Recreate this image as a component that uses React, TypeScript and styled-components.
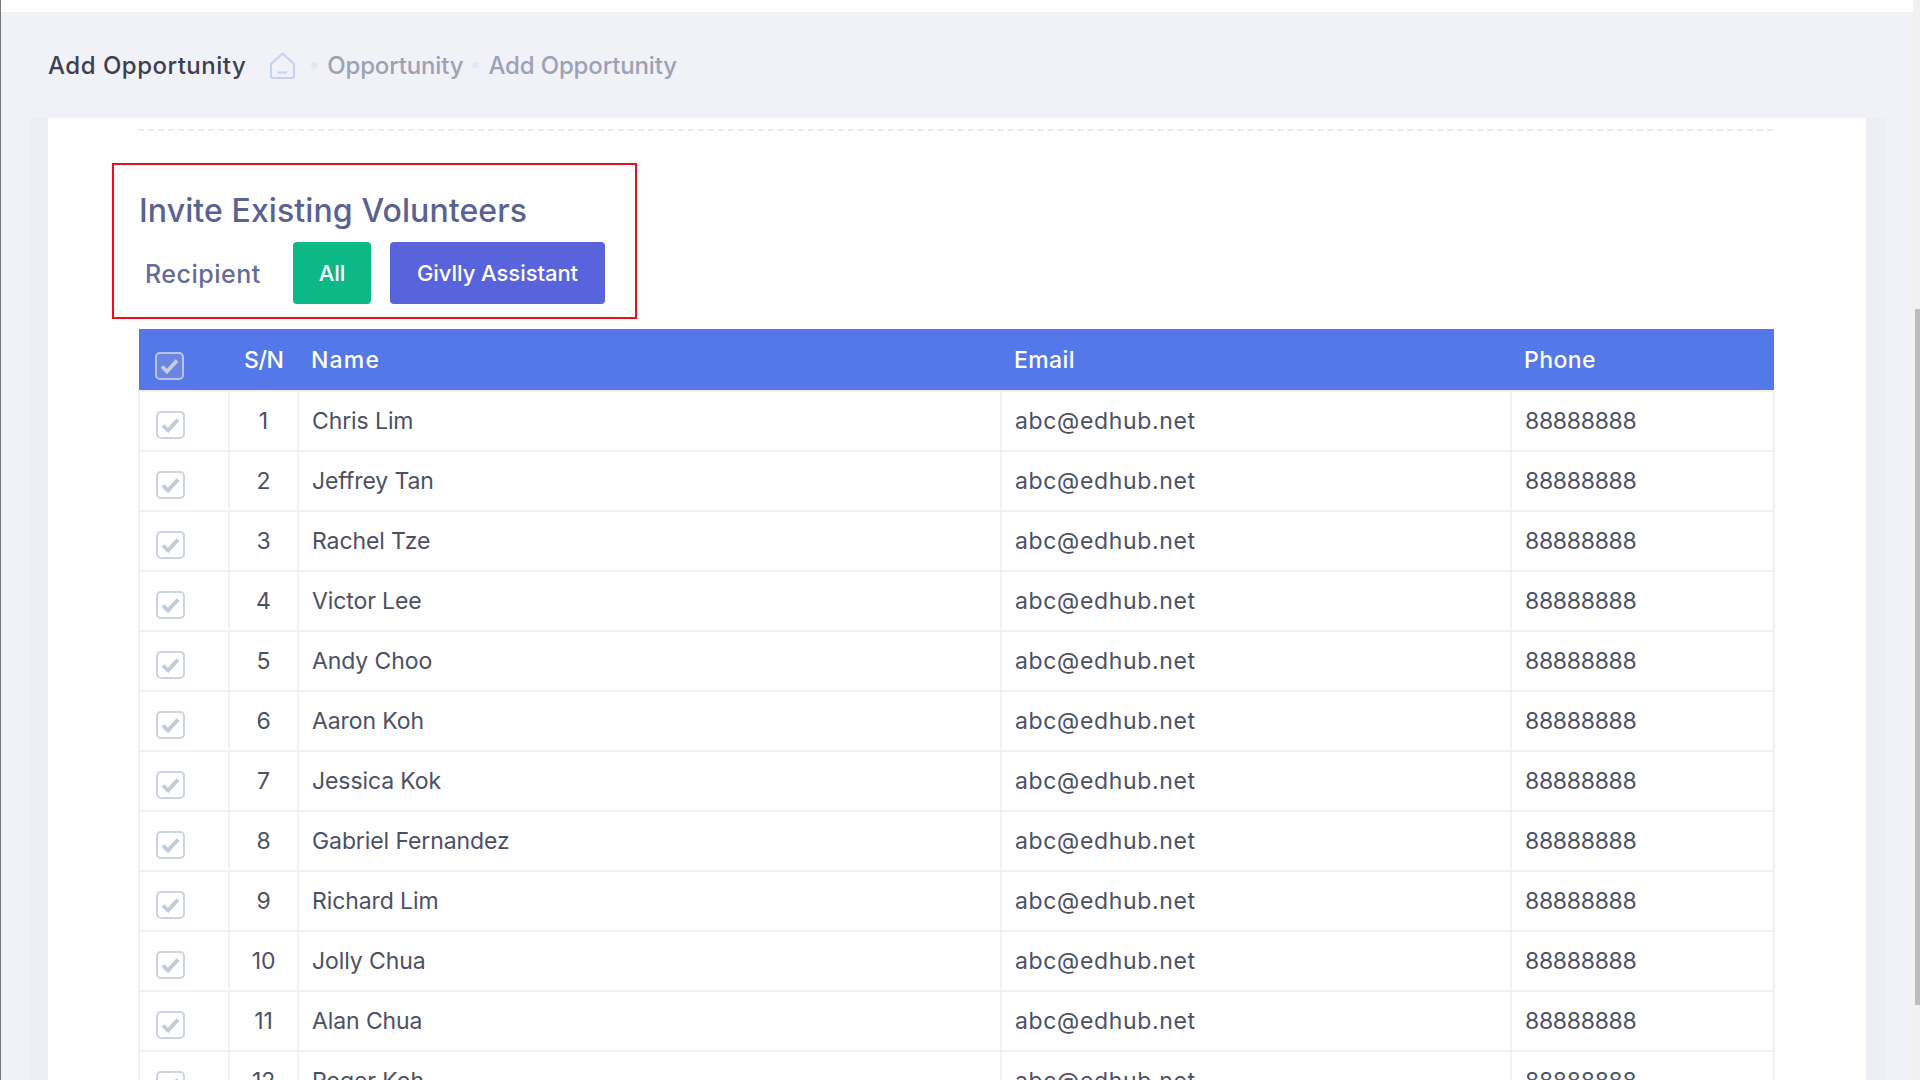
import React from "react";
import styled, { createGlobalStyle } from "styled-components";

const Global = createGlobalStyle`
  html, body { margin: 0; padding: 0; height: 100%; overflow: hidden; background: #f1f2f7; }
  #root { height: 100%; }
  * { box-sizing: border-box; }
`;

const Shell = styled.div`
  display: flex;
  width: 1920px;
  height: 1080px;
  overflow: hidden;
  font-family: Inter, "Liberation Sans", sans-serif;
  background: #f1f2f7;
  border-left: 1px solid #77787c;
`;

const Main = styled.main`
  flex: 1;
  min-width: 0;
  display: flex;
  flex-direction: column;
`;

const TopBar = styled.div`
  height: 13px;
  flex: none;
  background: #ffffff;
  border-bottom: 1px solid #eef0f4;
`;

const Breadcrumb = styled.header`
  height: 105px;
  flex: none;
  display: flex;
  align-items: center;
  padding: 0 0 0 47px;
`;

const PageTitle = styled.h1`
  margin: 0 23px 0 0;
  font-size: 24px;
  font-weight: 500;
  color: #3d4050;
  letter-spacing: 0.5px;
`;

const Crumb = styled.span`
  font-size: 24px;
  font-weight: 500;
  color: #9da1b6;
  letter-spacing: -0.15px;
`;

const Dot = styled.span`
  width: 7px;
  height: 7px;
  border-radius: 50%;
  background: #e6e8f0;
  margin: 0 9px;
  flex: none;
`;

const HomeIcon = styled.svg`
  width: 27px;
  height: 27px;
  flex: none;
  margin-right: 6px;
`;

const Band = styled.div`
  flex: 1;
  min-height: 0;
  width: 1855px;
  margin-left: 29px;
  padding: 0 19px 0 18px;
  background: #eeeff5;
`;

const Card = styled.section`
  height: 100%;
  background: #ffffff;
  padding: 11px 93px 0 90px;
  overflow: hidden;
`;

const Dashed = styled.div`
  border-top: 2px dashed #e9ebf1;
`;

const Highlight = styled.div`
  width: 525px;
  height: 156px;
  margin: 32px 0 10px -26px;
  padding: 24px 0 0 25px;
  border: 2px solid #ee0d1d;
`;

const Title = styled.h2`
  margin: 0 0 9px;
  font-size: 32px;
  line-height: 44px;
  font-weight: 500;
  color: #5a6291;
  letter-spacing: 0.1px;
`;

const RecipientRow = styled.div`
  display: flex;
  align-items: center;
  padding-left: 6px;
`;

const RecipientLabel = styled.span`
  width: 148px;
  font-size: 25px;
  font-weight: 500;
  color: #656c98;
  letter-spacing: 0.5px;
  padding-top: 1px;
`;

const FilterButton = styled.button<{ $color: string; $width: number }>`
  width: ${(p) => p.$width}px;
  height: 62px;
  margin-right: 19px;
  border: none;
  border-radius: 4px;
  background: ${(p) => p.$color};
  color: #ffffff;
  font-family: inherit;
  font-size: 22px;
  font-weight: 500;
  letter-spacing: -0.05px;
  padding: 0;
`;

const Table = styled.table`
  width: 1635px;
  table-layout: fixed;
  border-collapse: collapse;
`;

const HeadRow = styled.tr`
  height: 62px;
  background: #5478e9;
`;

const Th = styled.th<{ $center?: boolean; $spacing?: number }>`
  padding: 0 ${(p) => (p.$center ? 15 : 13)}px;
  text-align: ${(p) => (p.$center ? "center" : "left")};
  color: #ffffff;
  font-size: 23px;
  font-weight: 500;
  letter-spacing: ${(p) => p.$spacing ?? 0.4}px;
`;

const Row = styled.tr`
  height: 60px;
`;

const Td = styled.td<{ $center?: boolean; $spacing?: number }>`
  padding: 0 ${(p) => (p.$center ? 15 : 13)}px 1px;
  border: 2px solid #f1f2f7;
  text-align: ${(p) => (p.$center ? "center" : "left")};
  color: #4c5064;
  font-size: 23px;
  font-weight: 400;
  letter-spacing: ${(p) => p.$spacing ?? -0.1}px;
  white-space: nowrap;
`;

const CheckBox = styled.span<{ $head?: boolean }>`
  display: block;
  width: 29px;
  height: 28px;
  margin: ${(p) => (p.$head ? "13px" : "8px")} 0 0 3px;
  border-radius: 5px;
  border: 2px solid ${(p) => (p.$head ? "#b9c4e2" : "#cbd2e2")};
  background: ${(p) => (p.$head ? "#6b86e2" : "#ffffff")};
`;

const CheckSvg = styled.svg`
  display: block;
  width: 100%;
  height: 100%;
`;

const ScrollTrack = styled.div`
  width: 7px;
  flex: none;
  background: #f1f1f1;
  padding: 309px 0 0 2px;
`;

const ScrollThumb = styled.div`
  height: 696px;
  background: #bdbdbd;
`;

const Check = ({ head }: { head?: boolean }) => (
  <CheckBox $head={head}>
    <CheckSvg viewBox="0 0 25 24">
      <path d="M5 12.5l5 5L20 6.5" fill="none" stroke={head ? "#c9ced9" : "#c3cad9"} strokeWidth="3.8" />
    </CheckSvg>
  </CheckBox>
);

const names = [
  "Chris Lim",
  "Jeffrey Tan",
  "Rachel Tze",
  "Victor Lee",
  "Andy Choo",
  "Aaron Koh",
  "Jessica Kok",
  "Gabriel Fernandez",
  "Richard Lim",
  "Jolly Chua",
  "Alan Chua",
  "Roger Koh",
];

export default function App() {
  return (
    <Shell>
      <Global />
      <Main>
        <TopBar />
        <Breadcrumb>
          <PageTitle>Add Opportunity</PageTitle>
          <HomeIcon viewBox="0 0 27 27" fill="none" stroke="#c6d0f0" strokeWidth="2">
            <path d="M2 12L13.5 1.5 25 12v12a2 2 0 0 1-2 2H4a2 2 0 0 1-2-2z" />
            <path d="M9 20.5h9" />
          </HomeIcon>
          <Dot />
          <Crumb>Opportunity</Crumb>
          <Dot />
          <Crumb>Add Opportunity</Crumb>
        </Breadcrumb>
        <Band>
          <Card>
            <Dashed />
            <Highlight>
              <Title>Invite Existing Volunteers</Title>
              <RecipientRow>
                <RecipientLabel>Recipient</RecipientLabel>
                <FilterButton $color="#0cb886" $width={78}>All</FilterButton>
                <FilterButton $color="#5964dc" $width={215}>Givlly Assistant</FilterButton>
              </RecipientRow>
            </Highlight>
            <Table>
              <colgroup>
                <col style={{ width: 90 }} />
                <col style={{ width: 69 }} />
                <col style={{ width: 703 }} />
                <col style={{ width: 510 }} />
                <col style={{ width: 263 }} />
              </colgroup>
              <thead>
                <HeadRow>
                  <Th><Check head /></Th>
                  <Th $center $spacing={-0.4}>S/N</Th>
                  <Th $spacing={1.2}>Name</Th>
                  <Th>Email</Th>
                  <Th>Phone</Th>
                </HeadRow>
              </thead>
              <tbody>
                {names.map((n, i) => (
                  <Row key={n}>
                    <Td><Check /></Td>
                    <Td $center>{i + 1}</Td>
                    <Td>{n}</Td>
                    <Td $spacing={0.65}>abc@edhub.net</Td>
                    <Td $spacing={-0.3}>88888888</Td>
                  </Row>
                ))}
              </tbody>
            </Table>
          </Card>
        </Band>
      </Main>
      <ScrollTrack>
        <ScrollThumb />
      </ScrollTrack>
    </Shell>
  );
}
